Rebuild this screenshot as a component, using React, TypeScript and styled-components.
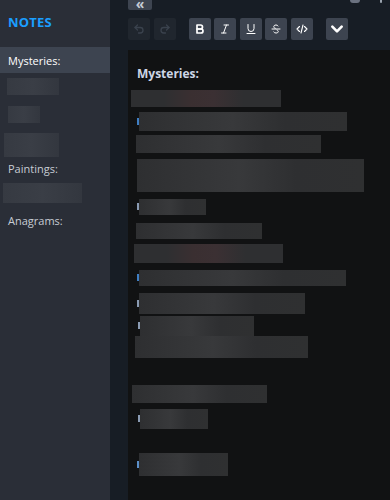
import React from "react";
import styled, { createGlobalStyle, css } from "styled-components";

const Global = createGlobalStyle`
  html, body { margin: 0; padding: 0; background: #171d25; }
  body { font-family: "Open Sans", "Noto Sans", sans-serif; }
  #root { width: 390px; height: 500px; overflow: hidden; }
`;

const Page = styled.div`
  display: flex;
  width: 390px;
  height: 500px;
  overflow: hidden;
  background: #171d25;
`;

const Sidebar = styled.nav`
  width: 110px;
  flex: none;
  background: #2a2e37;
  display: flex;
  flex-direction: column;
`;

const Brand = styled.div`
  color: #1a9fff;
  font-weight: 700;
  font-size: 13px;
  letter-spacing: 0.2px;
  padding: 13px 0 0 8px;
  height: 34px;
  box-sizing: border-box;
`;

const NavItem = styled.div<{ $active?: boolean; $mt?: number }>`
  height: 26px;
  display: flex;
  align-items: center;
  padding-left: 8px;
  margin-top: ${(p) => p.$mt ?? 0}px;
  font-size: 11px;
  color: ${(p) => (p.$active ? "#ffffff" : "#c7ccd4")};
  background: ${(p) => (p.$active ? "#3d4450" : "transparent")};
  margin-top: ${(p) => (p.$mt ?? 0)}px;
`;

const Blur = styled.div<{ $w: number; $h: number; $mt: number; $ml: number; $tone?: string; $tint?: boolean; $lead?: string }>`
  position: relative;
  flex: none;
  width: ${(p) => p.$w}px;
  height: ${(p) => p.$h}px;
  margin-top: ${(p) => p.$mt}px;
  margin-left: ${(p) => p.$ml}px;
  background: ${(p) =>
    p.$tint
      ? `linear-gradient(90deg, ${p.$tone} 0%, ${p.$tone} 22%, #3a2f31 40%, #3b3033 55%, ${p.$tone} 75%, ${p.$tone} 100%)`
      : `linear-gradient(90deg, ${p.$tone} 0%, #38393b 45%, ${p.$tone} 70%, #2f3031 100%)`};
  ${(p) =>
    p.$lead &&
    css`
      &::before {
        content: "";
        position: absolute;
        left: -2px;
        top: 50%;
        width: 2px;
        height: 7px;
        margin-top: -4px;
        background: ${p.$lead};
      }
    `}
`;

const SideBlur = styled(Blur)`
  background: linear-gradient(90deg, #363a42 0%, #3a3e46 50%, #33373f 100%);
`;

const Main = styled.div`
  flex: 1;
  display: flex;
  flex-direction: column;
  padding-left: 18px;
  position: relative;
`;

const TopBar = styled.div`
  height: 10px;
  display: flex;
  align-items: flex-end;
`;

const CollapseBtn = styled.div`
  width: 24px;
  height: 20px;
  margin-top: -10px;
  background: #3d4450;
  border-radius: 2px;
  color: #c6ccd6;
  font-size: 14px;
  font-weight: 700;
  display: flex;
  align-items: flex-end;
  justify-content: center;
  line-height: 12px;
`;

const TopIcons = styled.div`
  position: absolute;
  top: 0;
  right: 0;
  display: flex;
  gap: 20px;
  padding-right: 8px;
`;

const TopIconStub = styled.div<{ $w: number; $c: string }>`
  width: ${(p) => p.$w}px;
  height: 3px;
  background: ${(p) => p.$c};
  border-radius: 0 0 3px 3px;
`;

const Toolbar = styled.div`
  display: flex;
  align-items: center;
  margin-top: 8px;
  height: 22px;
`;

const Group = styled.div<{ $ml?: number }>`
  display: flex;
  gap: 3.5px;
  margin-left: ${(p) => p.$ml ?? 0}px;
`;

const ToolBtn = styled.div<{ $disabled?: boolean }>`
  width: 22px;
  height: 22px;
  border-radius: 2px;
  background: ${(p) => (p.$disabled ? "#20262e" : "#3d4450")};
  color: ${(p) => (p.$disabled ? "#3a424d" : "#ffffff")};
  display: flex;
  align-items: center;
  justify-content: center;
`;

const Editor = styled.div`
  flex: 1;
  margin-top: 10px;
  background: #111213;
  display: flex;
  flex-direction: column;
  align-items: flex-start;
  padding-top: 16px;
`;

const Heading = styled.div`
  margin-left: 9px;
  height: 16px;
  line-height: 16px;
  font-size: 12px;
  font-weight: 700;
  color: #cdd6e6;
`;

const Ico = ({ children, w = 12 }: { children: React.ReactNode; w?: number }) => (
  <svg width={w} height={w} viewBox="0 0 24 24" fill="none" stroke="currentColor" strokeWidth={2.6} strokeLinecap="round" strokeLinejoin="round">
    {children}
  </svg>
);

type B = { w: number; h: number; mt: number; ml: number; tint?: boolean; lead?: string };

const blocks: B[] = [
  { w: 150, h: 17, mt: 8, ml: 3, tint: true },
  { w: 208, h: 19, mt: 5, ml: 11, lead: "#3f7fc4" },
  { w: 185, h: 18, mt: 4, ml: 8 },
  { w: 227, h: 33, mt: 6, ml: 9 },
  { w: 67, h: 16, mt: 7, ml: 11, lead: "#8a9bb3" },
  { w: 126, h: 16, mt: 8, ml: 8 },
  { w: 149, h: 19, mt: 5, ml: 6, tint: true },
  { w: 207, h: 16, mt: 7, ml: 11, lead: "#3f7fc4" },
  { w: 166, h: 21, mt: 7, ml: 11, lead: "#8a9bb3" },
  { w: 114, h: 20, mt: 2, ml: 12, lead: "#8a9bb3" },
  { w: 173, h: 22, mt: 0, ml: 7 },
  { w: 135, h: 18, mt: 27, ml: 4 },
  { w: 68, h: 20, mt: 6, ml: 12, lead: "#8a9bb3" },
  { w: 89, h: 23, mt: 24, ml: 11, lead: "#5b8fc9" },
];

export default function App() {
  return (
    <Page>
      <Global />
      <Sidebar>
        <Brand>NOTES</Brand>
        <NavItem $active $mt={13}>Mysteries:</NavItem>
        <SideBlur $w={52} $h={17} $mt={5} $ml={7} />
        <SideBlur $w={32} $h={17} $mt={11} $ml={8} />
        <SideBlur $w={55} $h={24} $mt={10} $ml={4} />
        <NavItem $mt={-2}>Paintings:</NavItem>
        <SideBlur $w={79} $h={20} $mt={2} $ml={3} />
        <NavItem $mt={4}>Anagrams:</NavItem>
      </Sidebar>
      <Main>
        <TopBar>
          <CollapseBtn>«</CollapseBtn>
        </TopBar>
        <TopIcons>
          <TopIconStub $w={10} $c="#6b7280" />
          <TopIconStub $w={2} $c="#9aa3ae" />
        </TopIcons>
        <Toolbar>
          <Group>
            <ToolBtn $disabled>
              <Ico>
                <path d="M9 14 4 9l5-5" />
                <path d="M4 9h10.5a5.5 5.5 0 0 1 0 11H11" />
              </Ico>
            </ToolBtn>
            <ToolBtn $disabled>
              <Ico>
                <path d="m15 14 5-5-5-5" />
                <path d="M20 9H9.5a5.5 5.5 0 0 0 0 11H13" />
              </Ico>
            </ToolBtn>
          </Group>
          <Group $ml={13}>
            <ToolBtn>
              <Ico>
                <path d="M6 4h7a4 4 0 0 1 0 8H6z" strokeWidth={3.4} />
                <path d="M6 12h8a4 4 0 0 1 0 8H6z" strokeWidth={3.4} />
              </Ico>
            </ToolBtn>
            <ToolBtn>
              <Ico>
                <path d="M10 4h9M5 20h9M15 4 9 20" strokeWidth={2} />
              </Ico>
            </ToolBtn>
            <ToolBtn>
              <Ico>
                <path d="M6 3v8a6 6 0 0 0 12 0V3" strokeWidth={2} />
                <path d="M4 21h16" strokeWidth={2} />
              </Ico>
            </ToolBtn>
            <ToolBtn>
              <Ico>
                <path d="M16 6a4 3 0 0 0-4-2c-3 0-4.5 1.5-4.5 3.5 0 1.5 1 2.5 3 3" strokeWidth={2} />
                <path d="M4 12h16" strokeWidth={2} />
                <path d="M14 14c2 .8 2.5 1.8 2.5 3 0 2-1.8 3-4.5 3a5 4 0 0 1-4.5-2" strokeWidth={2} />
              </Ico>
            </ToolBtn>
            <ToolBtn>
              <Ico>
                <path d="m7 7-5 5 5 5M17 7l5 5-5 5M14 4l-4 16" strokeWidth={2.2} />
              </Ico>
            </ToolBtn>
          </Group>
          <Group $ml={13}>
            <ToolBtn>
              <Ico w={14}>
                <path d="m4 8 8 8 8-8" strokeWidth={4.5} />
              </Ico>
            </ToolBtn>
          </Group>
        </Toolbar>
        <Editor>
          <Heading>Mysteries:</Heading>
          {blocks.map((b, i) => (
            <Blur key={i} $w={b.w} $h={b.h} $mt={b.mt} $ml={b.ml} $tone="#2e2f31" $tint={b.tint} $lead={b.lead} />
          ))}
        </Editor>
      </Main>
    </Page>
  );
}
